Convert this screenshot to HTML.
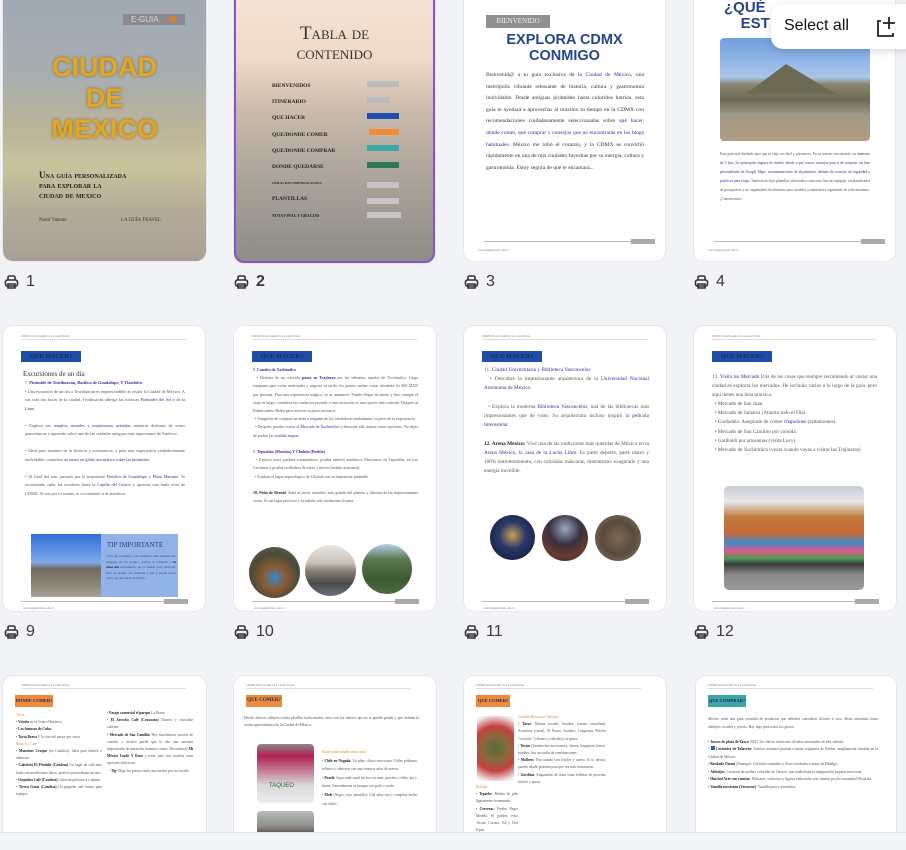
<!DOCTYPE html>
<html><head><meta charset="utf-8"><style>
*{margin:0;padding:0;box-sizing:border-box}
html{width:906px;height:850px;overflow:hidden;background:#f2f3f7}
body{width:906px;height:850px;overflow:hidden;background:#f2f3f7;font-family:"Liberation Serif",serif;position:relative}
.card{position:absolute;background:#fff;border-radius:10px;overflow:hidden;box-shadow:0 0 0 1px #e6e7ec}
.lab{position:absolute;font-family:"Liberation Sans",sans-serif;font-size:16px;color:#3a3a3a;display:flex;align-items:center;gap:7px}
.ab{position:absolute}
.t{position:absolute;font-size:4.6px;line-height:7.8px;color:#555;text-align:justify}
.t b{color:#222}
.t i{font-style:normal;color:#3a2a98}
.hd{position:absolute;left:18px;top:8px;width:165px;font-size:3px;color:#777;border-bottom:1px solid #ddd;padding-bottom:1px}
.tag{position:absolute;left:18px;top:18px;width:60px;height:11px;font-size:6.5px;font-weight:bold;text-align:center;line-height:11px;color:#1a2a60;white-space:nowrap;overflow:hidden}
.foot{position:absolute;left:18px;right:16px;height:1px;background:#bbb}
.pg{position:absolute;right:16px;width:24px;height:5px;background:#aaa}
.url{position:absolute;left:14px;font-size:3px;color:#777}
.circ{position:absolute;width:48px;height:48px;border-radius:50%}
</style></head><body>

<!-- ROW 1 -->
<div class="card" style="left:3px;top:-10px;width:203px;height:271px;background:linear-gradient(180deg,#9fa9b5 0%,#a7aeb2 30%,#b9b39a 50%,#c9c39c 65%,#b5ad98 80%,#a99f98 100%)">
  <div class="ab" style="left:120px;top:24px;width:62px;height:11px;background:#8a8a90;color:#ddd;font-size:8px;line-height:11px;padding-left:8px;font-family:'Liberation Sans',sans-serif">E-GUIA <span style="display:inline-block;width:7px;height:5px;background:#d9822b;margin-left:9px"></span></div>
  <div class="ab" style="left:0;width:203px;top:62px;text-align:center;color:#e3a622;font-family:'Liberation Sans',sans-serif;font-weight:bold;font-size:27px;line-height:31px;text-shadow:0 0 3px #7a6a30">CIUDAD<br>DE<br>MEXICO</div>
  <div class="ab" style="left:36px;top:180px;font-size:9px;line-height:10px;color:#222;font-weight:bold;font-variant:small-caps">Una guía personalizada<br>para explorar la<br>ciudad de mexico</div>
  <div class="ab" style="left:36px;top:228px;font-size:5px;color:#333">Nomi Valente</div>
  <div class="ab" style="left:118px;top:228px;font-size:5px;color:#333">LA GUÍA TRAVEL</div>
</div>
<div class="card" style="left:234px;top:-10px;width:201px;height:273px;border:2px solid #8753c9;background:linear-gradient(180deg,#f6e4d6 0%,#efd9c8 25%,#c9b9aa 45%,#aaa39a 70%,#8e8c88 100%)">
  <div class="ab" style="left:0;width:197px;top:32px;text-align:center;font-size:19px;line-height:20px;color:#333;font-variant:small-caps">Tabla de<br>contenido</div>
  <div class="ab" style="left:36px;top:86px;font-size:5.5px;line-height:16.2px;color:#222;font-weight:bold">BIENVENIDOS<br>ITINERARIO<br>QUE HACER<br>QUE/DONDE COMER<br>QUE/DONDE COMPRAR<br>DONDE QUEDARSE<br><span style="font-size:3.5px">OTRAS RECOMENDACIONES</span><br>PLANTILLAS<br><span style="font-size:4px">NOTA FINAL Y GRACIAS</span></div>
  <div class="ab" style="left:131px;top:89px;width:32px;height:6px;background:#bbb"></div>
  <div class="ab" style="left:131px;top:105px;width:22px;height:6px;background:#bbb"></div>
  <div class="ab" style="left:131px;top:121px;width:32px;height:6px;background:#1e4fb0"></div>
  <div class="ab" style="left:133px;top:137px;width:30px;height:6px;background:#ef8a3a"></div>
  <div class="ab" style="left:131px;top:153px;width:32px;height:6px;background:#3aa6a6"></div>
  <div class="ab" style="left:131px;top:170px;width:32px;height:6px;background:#2d7a55"></div>
  <div class="ab" style="left:131px;top:190px;width:32px;height:6px;background:#c8c4c4"></div>
  <div class="ab" style="left:131px;top:206px;width:32px;height:6px;background:#c8c4c4"></div>
  <div class="ab" style="left:131px;top:220px;width:34px;height:6px;background:#c8c4c4"></div>
</div>
<div class="card" style="left:464px;top:-10px;width:201px;height:271px">
  <div class="ab" style="left:22px;top:25px;width:64px;height:13px;background:#909090;color:#eee;font-size:7px;line-height:13px;text-align:center">BIENVENIDO</div>
  <div class="ab" style="left:0;width:201px;top:42px;text-align:center;font-family:'Liberation Sans',sans-serif;font-weight:bold;font-size:14.5px;line-height:16px;color:#24448e">EXPLORA CDMX<br>CONMIGO</div>
  <div class="t" style="left:22px;top:80px;width:158px;font-size:5.6px;line-height:11.6px;color:#333">Bienvenid@ a tu guía exclusiva de la <i>Ciudad de México</i>, una metrópolis vibrante rebosante de historia, cultura y gastronomía inolvidable. Desde antiguas pirámides hasta coloridos barrios, esta guía te ayudará a aprovechar al máximo tu tiempo en la CDMX con recomendaciones cuidadosamente seleccionadas sobre <i>qué hacer, dónde comer, qué comprar y consejos que no encontrarás en los blogs habituales.</i> México me robó el corazón, y la CDMX se convirtió rápidamente en una de mis ciudades favoritas por su energía, cultura y gastronomía. Estoy segura de que te encantará...</div>
  <div class="foot" style="top:251px;left:20px;right:28px"></div><div class="pg" style="top:249px;right:10px"></div>
  <div class="url" style="top:258px">www.laguiatravel.com.cv</div>
</div>
<div class="card" style="left:694px;top:-10px;width:201px;height:271px">
  <div class="ab" style="left:30px;top:10px;font-family:'Liberation Sans',sans-serif;font-weight:bold;font-size:15px;line-height:16px;color:#24448e">¿QUÉ<br>&nbsp;&nbsp;&nbsp;&nbsp;EST</div>
  <div class="ab" style="left:26px;top:48px;width:150px;height:103px;border-radius:4px;background:linear-gradient(180deg,#6f9fe0 0%,#a9c5ea 38%,#8a8570 45%,#6c6a55 60%,#a09a88 75%,#b39d80 100%)"></div>
  <div class="ab" style="left:52px;top:74px;width:0;height:0;border-left:40px solid transparent;border-right:50px solid transparent;border-bottom:30px solid #6d6a56"></div>
  <div class="t" style="left:26px;top:160px;width:150px;font-size:3.6px;line-height:9px">Esta guía está diseñada para que tu viaje sea fácil y placentero. En su interior encontrarás, un <i>itinerario de 5 días, los principales lugares de interés, dónde y qué comer, consejos para ir de compras, mi lista personalizada de Google Maps, recomendaciones de alojamiento, además de consejos de seguridad y prácticos para viajar.</i> También incluye plantillas adicionales como una lista de equipaje, un planificador de presupuesto y un organizador de itinerario para ayudarte a mantenerte organizado en todo momento. ¡Comencemos!</div>
  <div class="foot" style="top:251px;left:20px;right:28px"></div><div class="pg" style="top:249px;right:10px"></div>
  <div class="url" style="top:258px">www.laguiatravel.com.cv</div>
</div>

<div class="lab" style="left:4px;top:273px"><svg width="15" height="14" viewBox="0 0 15 14" fill="none" stroke="#333" stroke-width="1.6"><path d="M4 5V2.5Q4 1 5.5 1h4Q11 1 11 2.5V5"/><rect x="1.5" y="5" width="12" height="6" rx="2"/><path d="M4 9h7v4H4z"/></svg>1</div>
<div class="lab" style="left:234px;top:273px;font-weight:bold"><svg width="15" height="14" viewBox="0 0 15 14" fill="none" stroke="#333" stroke-width="1.6"><path d="M4 5V2.5Q4 1 5.5 1h4Q11 1 11 2.5V5"/><rect x="1.5" y="5" width="12" height="6" rx="2"/><path d="M4 9h7v4H4z"/></svg>2</div>
<div class="lab" style="left:464px;top:273px"><svg width="15" height="14" viewBox="0 0 15 14" fill="none" stroke="#333" stroke-width="1.6"><path d="M4 5V2.5Q4 1 5.5 1h4Q11 1 11 2.5V5"/><rect x="1.5" y="5" width="12" height="6" rx="2"/><path d="M4 9h7v4H4z"/></svg>3</div>
<div class="lab" style="left:694px;top:273px"><svg width="15" height="14" viewBox="0 0 15 14" fill="none" stroke="#333" stroke-width="1.6"><path d="M4 5V2.5Q4 1 5.5 1h4Q11 1 11 2.5V5"/><rect x="1.5" y="5" width="12" height="6" rx="2"/><path d="M4 9h7v4H4z"/></svg>4</div>

<!-- Select all -->
<div class="ab" style="left:771px;top:4px;width:145px;height:45px;background:#fff;border-radius:12px;box-shadow:0 2px 8px rgba(0,0,0,.15);font-family:'Liberation Sans',sans-serif;font-size:16px;color:#111;padding:13px 0 0 13px;z-index:5">Select all
<svg style="position:absolute;left:105px;top:12px" width="20" height="22" viewBox="0 0 20 22" fill="none" stroke="#222" stroke-width="1.8"><path d="M5 5H2v15h15v-3"/><path d="M13 1v12M7 7h12"/></svg></div>

<!-- ROW 2 -->
<div class="card" style="left:3px;top:326px;width:202px;height:285px">
  <div class="hd">CDMX Travel Guide by La Guía Travel</div>
  <div class="tag" style="background:#1f4ea8;top:25px">QUE HACER?</div>
  <div class="ab" style="left:20px;top:44px;font-size:7px;color:#333">Excursiones de un día</div>
  <div class="t" style="left:22px;top:53px;width:160px;font-size:4.3px;line-height:8.5px">7. <i><b style="color:#3a2a98">Pirámide de Teotihuacán, Basílica de Guadalupe, Y Tlatelolco</b></i><br>• Una excursión de un día a Teotihuacán es imprescindible al visitar la Ciudad de México. A sus solo dos horas de la ciudad, Teotihuacán alberga las icónicas <i>Pirámides del Sol y de la Luna.</i><br><br>• Explora sus <i>templos, murales y majestuosas avenidas</i> mientras disfrutas de vistas panorámicas y aprendes sobre una de las ciudades antiguas más importantes de América.<br><br>• Ideal para amantes de la historia y aventureros, y para una experiencia verdaderamente inolvidable, considera un <i>paseo en globo aerostático sobre las pirámides.</i><br><br>• Al final del tour, pasarás por la imponente <i>Basílica de Guadalupe</i> y <i>Plaza Mariana</i>. Te recomiendo subir las escaleras hasta la <i>Capilla del Cerrito</i> y apreciar una linda vista de CDMX. Si vas por tu cuenta, te recomiendo ir al atardecer.</div>
  <div class="ab" style="left:28px;top:208px;width:70px;height:63px;background:linear-gradient(180deg,#2f6fd8 0%,#7fa8e8 45%,#6f6a60 55%,#8b8578 80%,#a8a29a 100%)"></div>
  <div class="ab" style="left:98px;top:208px;width:77px;height:63px;background:#91b3e8"></div>
  <div class="ab" style="left:104px;top:215px;font-size:7px;color:#2a3e90">TIP IMPORTANTE</div>
  <div class="t" style="left:103px;top:228px;width:70px;font-size:3.4px;line-height:5.6px;color:#3a4a80">Lleva un paraguas o un sombrero bien tendido sol. Después de un tiempo, puedes ir tomando a <b>la cima del</b> monumento de la ciudad para disfrutar. Para el tiempo en animarte a pie y puede hacer calor, así que sería necesario.</div>
  <div class="foot" style="top:275px;right:20px"></div><div class="pg" style="top:273px;right:17px;width:24px"></div>
  <div class="url" style="top:280px;left:20px">www.laguiatravel.com.cv</div>
</div>
<div class="card" style="left:234px;top:326px;width:202px;height:285px">
  <div class="hd">CDMX Travel Guide by La Guía Travel</div>
  <div class="tag" style="background:#1f4ea8;top:25px">QUE HACER?</div>
  <div class="t" style="left:19px;top:40px;width:165px;font-size:4px;line-height:8.2px">8. <i><b style="color:#3a2a98">Canales de Xochimilco</b></i><br>&nbsp;&nbsp;• Disfruta de un colorido <i><b style="color:#3a2a98">paseo en Trajinera</b></i> por los vibrantes canales de Xochimilco. Llega temprano para evitar multitudes y negocia su tarifa; los paseos suelen costar alrededor de 800 MXN por persona. Para una experiencia mágica, ve al amanecer. Puedes llegar en metro y bus, aunque el viaje es largo; considera un conductor privado o una excursión es una opción más cómoda. Dirígete al Embarcadero Belén para reservar tu paseo en barco.<br>&nbsp;&nbsp;• Asegúrate de comprar un <i>elote o esquites</i> de los vendedores ambulantes, es parte de la experiencia.<br>&nbsp;&nbsp;• Después, puedes visitar el <i>Mercado de Xochimilco</i> y almorzar allí; tienen varias opciones. No dejes de probar las <i>tortillas negras.</i><br><br>9. <i><b style="color:#3a2a98">Tepoztlán (Morelos) Y Cholula (Puebla)</b></i><br>&nbsp;&nbsp;• Explora estos pueblos encantadores, prueba sabores auténticos Mexicanos en Tepoztlán, en Las Carolinas y prueba recibiditas de nieve y nieves (helado artesanal).<br>&nbsp;&nbsp;• Explora el lugar arqueológico de Cholula con su imponente pirámide.<br><br><b>10. Peña de Bernal</b>: Sube al tercer monolito más grande del planeta y disfruta de las impresionantes vistas. Es un lugar precioso y la subida vale totalmente la pena.</div>
  <div class="circ" style="left:15px;top:221px;width:51px;height:51px;background:radial-gradient(circle at 50% 60%,#3a88c8 0%,#8a5a30 30%,#4a4a3a 60%,#6a7060 100%)"></div>
  <div class="circ" style="left:71px;top:219px;width:51px;height:51px;background:linear-gradient(180deg,#e8e4de 0%,#c8c2ba 35%,#8a8478 50%,#4a4a48 75%,#6a7080 100%)"></div>
  <div class="circ" style="left:128px;top:218px;width:50px;height:50px;background:linear-gradient(180deg,#b8d0ea 0%,#5a7a50 30%,#3c5a30 70%,#4a6a3c 100%)"></div>
  <div class="foot" style="top:275px;right:20px"></div><div class="pg" style="top:273px;right:17px"></div>
  <div class="url" style="top:280px;left:20px">www.laguiatravel.com.cv</div>
</div>
<div class="card" style="left:464px;top:326px;width:202px;height:285px">
  <div class="hd">CDMX Travel Guide by La Guía Travel</div>
  <div class="tag" style="background:#1f4ea8;top:25px">QUE HACER?</div>
  <div class="t" style="left:20px;top:40px;width:165px;font-size:5.3px;line-height:9.2px">11. <i>Ciudad Universitaria y Biblioteca Vasconcelos</i><br>&nbsp;&nbsp;• Descubre la impresionante arquitectura de la <i>Universidad Nacional Autónoma de México.</i><br><br>&nbsp;&nbsp;• Explora la moderna <i>Biblioteca Vasconcelos</i>, una de las bibliotecas más impresionantes que he visto. Su arquitectura incluso inspiró la <i>película Interestelar.</i><br><br><b>12. Arena México:</b> Vive una de las tradiciones más queridas de México en la <i>Arena México, la casa de la Lucha Libre.</i> Es parte deporte, parte teatro y 100% entretenimiento, con coloridas máscaras, dramatismo exagerado y una energía increíble.</div>
  <div class="circ" style="left:26px;top:189px;width:45px;height:45px;background:radial-gradient(circle at 50% 45%,#c8a050 0%,#2a3a6a 40%,#1a2040 80%)"></div>
  <div class="circ" style="left:78px;top:189px;width:46px;height:46px;background:radial-gradient(circle at 50% 30%,#9aa8c0 0%,#3a3040 40%,#6a3a30 70%,#2a2020 100%)"></div>
  <div class="circ" style="left:131px;top:189px;width:46px;height:46px;background:radial-gradient(circle at 50% 50%,#7a6a5a 0%,#5a4a3a 50%,#8a7a6a 100%)"></div>
  <div class="foot" style="top:275px;right:20px"></div><div class="pg" style="top:273px;right:17px"></div>
  <div class="url" style="top:280px;left:20px">www.laguiatravel.com.cv</div>
</div>
<div class="card" style="left:694px;top:326px;width:202px;height:285px">
  <div class="hd">CDMX Travel Guide by La Guía Travel</div>
  <div class="tag" style="background:#1f4ea8;top:25px">QUE HACER?</div>
  <div class="t" style="left:18px;top:47px;width:165px;font-size:5.2px;line-height:9.1px">13. <i>Visita los Mercado</i> Una de las cosas que siempre recomiendo al visitar una ciudad es explorar los mercados. He incluido varios a lo largo de la guía, pero aquí tienes una lista práctica.<br>&nbsp;&nbsp;• Mercado de San Juan.<br>&nbsp;&nbsp;• Mercado de Jamaica (Abierto todo el Día).<br>&nbsp;&nbsp;• Ciudadela: Asegúrate de comer <i>chapulines</i> (saltamontes).<br>&nbsp;&nbsp;• Mercado de San Camilito por comida.<br>&nbsp;&nbsp;• Garibaldi por artesanías (visita Lucy).<br>&nbsp;&nbsp;• Mercado de Xochimilco (visita cuando vayas a visitar las Trajineras)</div>
  <div class="ab" style="left:30px;top:160px;width:140px;height:104px;border-radius:5px;background:linear-gradient(180deg,#c8ccd4 0%,#e8e8e8 15%,#c07a3a 30%,#c86a38 45%,#3a8ac8 55%,#e05a8a 62%,#4a9a5a 70%,#3a3a3a 75%,#8a8a88 85%,#9a9a98 100%)"></div>
  <div class="foot" style="top:275px;right:20px"></div><div class="pg" style="top:273px;right:17px"></div>
  <div class="url" style="top:280px;left:20px">www.laguiatravel.com.cv</div>
</div>

<div class="lab" style="left:4px;top:623px"><svg width="15" height="14" viewBox="0 0 15 14" fill="none" stroke="#333" stroke-width="1.6"><path d="M4 5V2.5Q4 1 5.5 1h4Q11 1 11 2.5V5"/><rect x="1.5" y="5" width="12" height="6" rx="2"/><path d="M4 9h7v4H4z"/></svg>9</div>
<div class="lab" style="left:234px;top:623px"><svg width="15" height="14" viewBox="0 0 15 14" fill="none" stroke="#333" stroke-width="1.6"><path d="M4 5V2.5Q4 1 5.5 1h4Q11 1 11 2.5V5"/><rect x="1.5" y="5" width="12" height="6" rx="2"/><path d="M4 9h7v4H4z"/></svg>10</div>
<div class="lab" style="left:464px;top:623px"><svg width="15" height="14" viewBox="0 0 15 14" fill="none" stroke="#333" stroke-width="1.6"><path d="M4 5V2.5Q4 1 5.5 1h4Q11 1 11 2.5V5"/><rect x="1.5" y="5" width="12" height="6" rx="2"/><path d="M4 9h7v4H4z"/></svg>11</div>
<div class="lab" style="left:694px;top:623px"><svg width="15" height="14" viewBox="0 0 15 14" fill="none" stroke="#333" stroke-width="1.6"><path d="M4 5V2.5Q4 1 5.5 1h4Q11 1 11 2.5V5"/><rect x="1.5" y="5" width="12" height="6" rx="2"/><path d="M4 9h7v4H4z"/></svg>12</div>

<!-- ROW 3 -->
<div class="card" style="left:3px;top:676px;width:203px;height:156px;border-radius:10px 10px 0 0">
  <div class="hd" style="left:18px;top:7px">CDMX Travel Guide by La Guía Travel</div>
  <div class="tag" style="background:#ef8a3a;top:19px;left:12px;width:38px;height:12px;font-size:4.5px;line-height:12px">DONDE COMER?</div>
  <div class="t" style="left:13px;top:36px;width:86px;font-size:3.6px;line-height:7.2px"><span style="color:#e08a3a">Tacos</span><br>• <b>Vitoria</b> en el Centro Histórico.<br>• <b>Los famosos de Cuba.</b><br>• <b>Torta Brava</b> Y la casa del pastor por cerca.<br><span style="color:#e08a3a">Brunch o Cafe</span><br>• <b>Monsieur Croque</b> (en Condesa): Ideal para brunch o almorzar.<br>• <b>Cafetería El Péndulo (Condesa)</b> Un lugar de café muy lindo con muchísimos libros, perfecto para trabajar un rato.<br>• <b>Orquídea Café (Condesa)</b> Cafetería pintoresca e íntima.<br>• <b>Tierra Garat (Condesa)</b> Un pequeño café bueno para trabajar.</div>
  <div class="t" style="left:104px;top:34px;width:86px;font-size:3.6px;line-height:7.2px">• <b>Pasaje comercial el parque</b> La Roma<br>• <b>El Jarocho Café (Coyoacán)</b> Churros y chocolate caliente.<br>• <b>Mercado de San Camilito</b> Hay muchísimos puestos de comida, y incluso puede que te den una serenata improvisada de mariachis mientras comes. Recomiendo <b>Mi México Lindo Y Roro</b> y lente, pero hay muchas otras opciones deliciosas.<br>&nbsp;&nbsp;◦ <b>Tip</b>: Elige los puestos más concurridos por los locales.</div>
</div>
<div class="card" style="left:234px;top:676px;width:202px;height:156px;border-radius:10px 10px 0 0">
  <div class="hd" style="left:12px;top:7px">CDMX Travel Guide by La Guía Travel</div>
  <div class="tag" style="background:#ef8a3a;top:19px;left:12px;width:36px;height:12px;font-size:5px;line-height:12px">QUE COMER?</div>
  <div class="t" style="left:10px;top:39px;width:175px;font-size:3.7px;line-height:7px">Desde clásicos callejeros hasta platillos tradicionales, estos son los sabores que no te puedes perder y que definen la escena gastronómica de la Ciudad de México.</div>
  <div class="ab" style="left:23px;top:68px;width:57px;height:59px;border-radius:4px;background:linear-gradient(180deg,#8a8a8a 0%,#b02050 20%,#d8d8d8 70%,#eee 100%)"></div>
  <div class="ab" style="left:35px;top:107px;font-size:6px;color:#2a6a3a;font-family:'Liberation Sans',sans-serif">TAQUEO</div>
  <div class="ab" style="left:23px;top:135px;width:57px;height:40px;border-radius:4px;background:linear-gradient(180deg,#bbb 0%,#8a8a88 40%,#3a2020 70%,#6a5a20 100%)"></div>
  <div class="t" style="left:88px;top:72px;width:95px;font-size:3.6px;line-height:8.6px"><span style="color:#e08a3a">Platos tradicionales mexicanos</span><br>• <b>Chile en Nogada</b>: Un plato clásico mexicano: Chiles poblanos rellenos y cubiertos con una cremosa salsa de nueces.<br>• <b>Pozole</b>: Sopa tradicional hecha con maíz pozolero, chiles, ajo y limón. Generalmente se prepara con pollo o cerdo.<br>• <b>Mole</b> (Negro, rojo, amarillo): Una salsa rica y compleja hecha con chiles.</div>
</div>
<div class="card" style="left:464px;top:676px;width:202px;height:156px;border-radius:10px 10px 0 0">
  <div class="hd" style="left:12px;top:7px">CDMX Travel Guide by La Guía Travel</div>
  <div class="tag" style="background:#ef8a3a;top:19px;left:12px;width:34px;height:12px;font-size:4.5px;line-height:12px">QUE COMER?</div>
  <div class="ab" style="left:13px;top:40px;width:37px;height:65px;border-radius:4px;background:radial-gradient(circle at 50% 50%,#5a6a3a 0%,#8a6a3a 35%,#c84040 60%,#eee 90%)"></div>
  <div class="t" style="left:12px;top:108px;width:42px;font-size:3.6px;line-height:7.2px"><span style="color:#e08a3a">Bebidas</span><br>• <b>Tepache</b>: Bebida de piña ligeramente fermentada.<br>• <b>Cervezas</b>: Prueba Negra Modelo. Si puedes, evita Tecate, Corona, Sol y Dos Equis.</div>
  <div class="t" style="left:54px;top:38px;width:88px;font-size:3.6px;line-height:7.2px"><span style="color:#e08a3a">Comida Mexicana Callejera</span><br>• <b>Tacos</b>: Marina (verde), Suadero (carnes envueltas), Arrachera (carne), Al Pastor, Suadero, Longaniza. Pídelos "con todo" (cilantro y cebolla) si te gusta.<br>• <b>Tortas</b> (Sándwiches mexicanos): Jamón, longaniza, huevo, suadero; hay un sinfín de combinaciones.<br>• <b>Molletes</b>: Pan untado con frijoles y queso. Si lo deseas, puedes añadir proteína para que sea más sustancioso.<br>• <b>Gorditas</b>: Empanadas de maíz fritas rellenas de proteína, frijoles y queso.</div>
</div>
<div class="card" style="left:696px;top:676px;width:200px;height:156px;border-radius:10px 10px 0 0">
  <div class="hd" style="left:12px;top:7px">CDMX Travel Guide by La Guía Travel</div>
  <div class="tag" style="background:#3aa6a6;top:19px;left:12px;width:38px;height:12px;font-size:4.5px;line-height:12px">QUE COMPRAR?</div>
  <div class="t" style="left:12px;top:40px;width:170px;font-size:3.7px;line-height:7.5px">México tiene una gran variedad de productos que deberías considerar llevarte a casa, desde artesanías hasta alebrijes, textiles y joyería. Hay algo para todos los gustos.<br><br>• <b>Jarros de plata de Taxco</b> (925): Un clásico mexicano: diseños artesanales de alta calidad.<br>• <span style="display:inline-block;width:4px;height:4px;background:#3a5ab0"></span> <b>Cerámica de Talavera</b>: Icónica cerámica pintada a mano originaria de Puebla, ampliamente vendida en la Ciudad de México.<br>• <b>Bordado Otomí</b> (Tenango): Coloridos animales y flores bordados a mano de Hidalgo.<br>• <b>Alebrijes</b>: Criaturas de madera coloridas de Oaxaca, que simbolizan la imaginación popular mexicana.<br>• <b>Huichol Arte con cuentas</b>: Máscaras, calaveras y figuras elaboradas con cuentas por la comunidad Wixárika.<br>• <b>Vainilla mexicana (Veracruz)</b>: Vainilla pura y aromática.</div>
</div>

<div class="ab" style="left:0;top:832px;width:906px;height:18px;background:#f3f4f7;border-top:1px solid #e3e4e9;z-index:10"></div>
</body></html>
